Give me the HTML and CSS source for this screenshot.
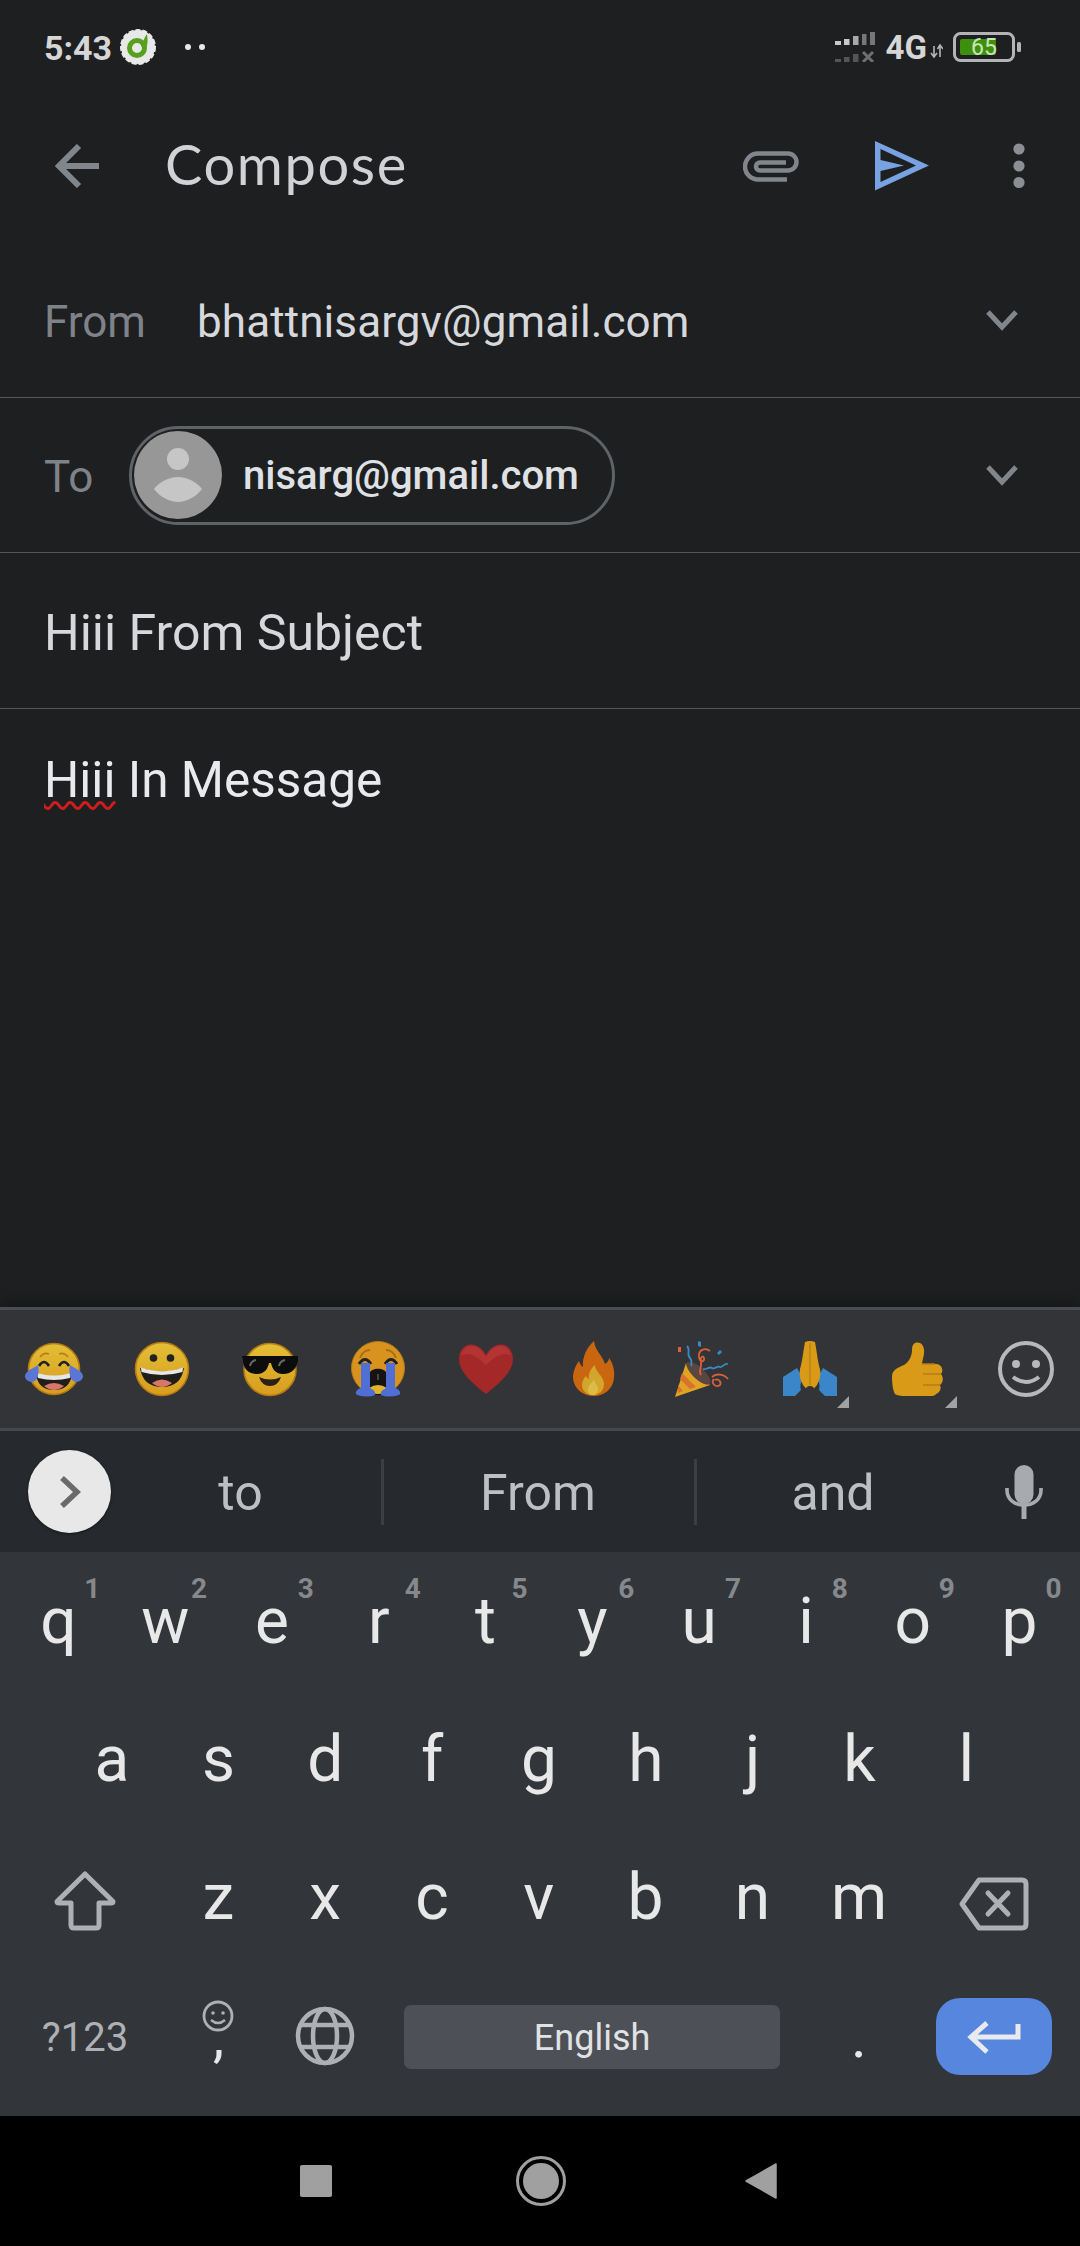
FILE: index.html
```html
<!DOCTYPE html>
<html lang="en">
<head>
<meta charset="utf-8">
<title>Compose</title>
<link rel="stylesheet" href="styles.css">
</head>
<body>
<div class="screen">
  <div class="status">
    <span class="time">5:43</span>
    <svg class="notif" width="38" height="38" viewBox="0 0 38 38">
      <circle cx="19" cy="19" r="17" fill="#e8e8e8" stroke="#e8e8e8" stroke-width="2" stroke-dasharray="5 2"/>
      <circle cx="18" cy="20" r="7.500" fill="none" stroke="#55a11f" stroke-width="5"/>
      <path d="M22 18 C24 14 25 10 28 6 C29 12 29 18 26 22Z" fill="#55a11f"/>
    </svg>
    <span class="dots"><i></i><i></i></span>
    <div class="status-right">
      <svg width="40" height="30" viewBox="0 0 40 30">
        <rect x="0" y="9" width="6" height="4" fill="#c8c8c8"/><rect x="9" y="7" width="5.5" height="6" fill="#c8c8c8"/><rect x="18" y="4" width="5.5" height="9" fill="#a9a9a9"/><rect x="27" y="2" width="4.5" height="11" fill="#777"/><rect x="35" y="0" width="5" height="13" fill="#777"/>
        <rect x="0" y="27" width="6" height="3" fill="#555"/><rect x="9" y="25" width="5.5" height="5" fill="#555"/><rect x="18" y="22" width="5.5" height="8" fill="#555"/>
        <path d="M28 20 L38 30 M38 20 L28 30" stroke="#6f6f6f" stroke-width="3" fill="none"/>
      </svg>
      <span class="net">4G</span>
      <svg class="arrows" width="13" height="14" viewBox="0 0 13 14"><path d="M4 2V12M1 9L4 13L7 9M10 13V2M7.5 5L10 1L13 5" stroke="#b5b5b5" stroke-width="1.6" fill="none"/></svg>
      <svg class="battery" width="68" height="30" viewBox="0 0 68 30">
        <rect x="1.5" y="1.5" width="59" height="27" rx="6" fill="none" stroke="#b4b4b4" stroke-width="3"/>
        <rect x="7" y="7" width="36" height="16" rx="2" fill="#3f8f0f"/>
        <rect x="64" y="10" width="4" height="10" rx="1.5" fill="#b4b4b4"/>
        <text x="31" y="23" class="bat-text" text-anchor="middle">65</text>
      </svg>
    </div>
  </div>

  <div class="appbar">
    <svg width="44" height="44" viewBox="0 0 44 44"><path d="M44 22H5M24 2L4 22L24 42" fill="none" stroke="#80868b" stroke-width="6"/></svg>
    <span class="title">Compose</span>
    <div class="actions">
      <svg width="56" height="31" viewBox="0 0 56 31"><path d="M44 28.5H15A13 13 0 0 1 15 2.5H45A8.5 8.5 0 0 1 45 19.5H17A3.8 3.8 0 0 1 17 11.5H43" fill="none" stroke="#80868b" stroke-width="4.5"/></svg>
      <svg width="55" height="50" viewBox="0 0 55 50"><path fill-rule="evenodd" d="M0 0L54 24.5L0 49.5ZM5.5 8V19L29 24.5L5.5 30V41L41 24.5Z" fill="#78a2e2"/></svg>
      <svg width="12" height="46" viewBox="0 0 12 46"><circle cx="6" cy="6" r="5.6" fill="#8b8e93"/><circle cx="6" cy="23" r="5.6" fill="#8b8e93"/><circle cx="6" cy="39.500" r="5.6" fill="#8b8e93"/></svg>
    </div>
  </div>

  <div class="field from">
    <span class="label from-label">From</span>
    <span class="value">bhattnisargv@gmail.com</span>
    <svg class="chev chev-from" width="32" height="22" viewBox="0 0 32 22"><path d="M2 3L16 18L30 3" fill="none" stroke="#80868b" stroke-width="5"/></svg>
  </div>
  <div class="field to">
    <span class="label to-label">To</span>
    <div class="chip">
      <svg class="avatar" width="88" height="88" viewBox="0 0 88 88">
        <circle cx="44" cy="44" r="44" fill="#979797"/>
        <circle cx="44" cy="28" r="11" fill="#c6c6c6"/>
        <path d="M20 58C26 50 36 46 44 46C52 46 62 50 68 58C62 66 52 71 44 71C36 71 26 66 20 58Z" fill="#c6c6c6"/>
      </svg>
      <span class="chip-text">nisarg@gmail.com</span>
    </div>
    <svg class="chev" width="32" height="22" viewBox="0 0 32 22"><path d="M2 3L16 18L30 3" fill="none" stroke="#80868b" stroke-width="5"/></svg>
  </div>
  <div class="field subject"><span class="big">Hiii From Subject</span></div>
  <div class="message"><span class="big msg"><span class="typo">Hiii</span> In Message</span></div>

  <div class="keyboard">
    <div class="emoji-row">
      <div class="emoji">
        <svg width="58" height="56" viewBox="-1 0 58 56">
          <defs>
            <linearGradient id="face" x1="0" y1="0" x2="0" y2="1"><stop offset="0" stop-color="#e2bf36"/><stop offset="1" stop-color="#d89c1e"/></linearGradient>
          </defs>
          <circle cx="28" cy="28" r="25.500" fill="url(#face)" stroke="#b57a12" stroke-width="1.6"/>
          <path d="M14 16Q18 11 23 13M33 13Q38 11 42 16" fill="none" stroke="#bd7d14" stroke-width="1.6"/>
          <path d="M13 25Q18 17 23 25M33 25Q38 17 43 25" fill="none" stroke="#222" stroke-width="2.6"/>
          <path d="M10 33Q28 37 46 33Q44 49 28 49Q12 49 10 33Z" fill="#211d1b"/>
          <path d="M11 32Q28 37 45 32L44 37Q28 41 12 37Z" fill="#e6e6e6"/>
          <path d="M18 45Q28 39 38 45Q33 49 28 49Q23 49 18 45Z" fill="#d6776a"/>
          <path d="M12 24C8 27 -1 30 -1 35.500A6.500 6.500 0 0 0 10 39C13 35 13 29 12 24Z" fill="#5b77d6"/>
          <path d="M44 24C48 27 57 30 57 35.500A6.500 6.500 0 0 1 46 39C43 35 43 29 44 24Z" fill="#5b77d6"/>
        </svg>
      </div>
      <div class="emoji">
        <svg width="56" height="56" viewBox="0 0 56 56">
          <circle cx="28" cy="28" r="26.500" fill="url(#face)" stroke="#b57a12" stroke-width="1.6"/>
          <circle cx="19.500" cy="17" r="3.800" fill="#222"/><circle cx="36.500" cy="17" r="3.800" fill="#222"/>
          <path d="M6 27Q28 34 50 27Q47 46 28 46Q9 46 6 27Z" fill="#211d1b"/>
          <path d="M7 26.500Q28 34 49 26.500L48.500 31Q28 37 7.500 31Z" fill="#e6e6e6"/>
          <path d="M18 42Q28 35 38 42Q33 46 28 46Q23 46 18 42Z" fill="#d6776a"/>
        </svg>
      </div>
      <div class="emoji">
        <svg width="56" height="56" viewBox="0 0 56 56">
          <circle cx="28" cy="28.500" r="26" fill="url(#face)" stroke="#b57a12" stroke-width="1.6"/>
          <path d="M0 15H56V19C55 27 50 33 41 33C33 33 30 27 29 22H27C26 27 23 33 15 33C6 33 1 27 1 19Z" fill="#0c0c0c"/>
          <path d="M8 25Q9 20 14 19M37 25Q38 20 43 19" fill="none" stroke="#666" stroke-width="2"/>
          <path d="M17 36Q28 41 39 36Q36 45 28 45Q20 45 17 36Z" fill="#2a2015"/>
        </svg>
      </div>
      <div class="emoji">
        <svg width="56" height="56" viewBox="0 0 56 56">
          <circle cx="28" cy="27" r="26.500" fill="#d8931f" stroke="#b57a12" stroke-width="1"/>
          <path d="M10 17Q13 9 20 9M36 9Q43 9 46 17" fill="none" stroke="#a96d18" stroke-width="1.8"/>
          <path d="M9 23Q15 14 21 23M35 23Q41 14 47 23" fill="none" stroke="#222" stroke-width="3"/>
          <path d="M19 33C21 26 35 26 37 33L38 54H18Z" fill="#161412"/>
          <path d="M19 47Q28 41 37 47Q37 53 28 53Q19 53 19 47Z" fill="#e0b52c"/>
          <path d="M27 33H29V39H27Z" fill="#444"/>
          <path d="M11 22H20V47C23 49 26 50 25 54Q18 57 7 54C4 52 7 48 11 47Z" fill="#4f6fd4"/>
          <path d="M36 22H45V47C49 48 52 52 49 54Q38 57 31 54C30 50 33 49 36 47Z" fill="#4f6fd4"/>
        </svg>
      </div>
      <div class="emoji">
        <svg width="56" height="56" viewBox="0 0 56 56">
          <path d="M28 14C24 6 17 3 12 3.500C5 4 1 11 1 18C1 32 17 44 28 53C39 44 55 32 55 18C55 11 51 4 44 3.500C39 3 32 6 28 14Z" fill="#a42828"/>
          <path d="M3 15C4 8 9 5 14 5C19 5 24 9 28 16C32 9 37 5 42 5C47 5 52 8 53 15C48 11 40 12 28 24C16 12 8 11 3 15Z" fill="#b43434"/>
        </svg>
      </div>
      <div class="emoji">
        <svg width="42" height="56" viewBox="0 0 42 56">
          <path d="M21 0C22 10 30 15 32 23C34 22 36 19 36 17C40 22 42 30 41 37C40 48 31 55 21 55C10 55 1 48 0 37C0 30 3 24 6 20C7 23 8 25 10 26C9 16 14 6 21 0Z" fill="#c9660f"/>
          <path d="M22 24C22 31 31 35 31 43C31 50 26 54 20 54C14 54 9 50 9 44C9 40 11 37 13 35C14 37 15 38 16 38C15 33 18 27 22 24Z" fill="#d2a62c"/>
          <path d="M21 38C21 42 25 44 25 48C25 52 22 54 20 54C17 54 15 52 15 49C15 44 19 42 21 38Z" fill="#dcbc46"/>
        </svg>
      </div>
      <div class="emoji">
        <svg width="56" height="56" viewBox="0 0 56 56">
          <path d="M12 22L36 44L1 56Z" fill="#e0a324"/>
          <path d="M8 32L22 46L16 48L6 38ZM4 44L9 50L4 52Z" fill="#d9722c"/>
          <path d="M12 22C18 18 30 26 36 38C38 44 34 45 28 42C20 38 12 28 12 22Z" fill="#5a4640"/>
          <path d="M24 0L27 1L27 6L24 5ZM46 9L48 11L45 14L43 12Z" fill="#3a88c4"/>
          <path d="M4 6L7 6L7 11L4 11Z" fill="#d9603a"/>
          <path d="M13 5C17 9 12 13 16 17C19 20 16 23 18 25M29 28C33 29 35 25 38 27C41 29 43 24 46 26C48 27 50 22 54 23" fill="none" stroke="#3a88c4" stroke-width="1.8"/>
          <path d="M36 10C31 6 24 9 25 16C26 22 31 21 30 17C29 14 26 16 27 20C28 28 24 30 27 34M38 36C42 32 50 33 54 38M40 38C36 42 42 47 46 44C48 41 44 37 41 39" fill="none" stroke="#d9603a" stroke-width="1.8"/>
        </svg>
      </div>
      <div class="emoji">
        <svg width="56" height="56" viewBox="0 0 56 56">
          <path d="M1 55V36L15 27L21 38C18 42 18 46 19 49L13 55Z" fill="#3a86c8"/>
          <path d="M55 55V36L41 27L35 38C38 42 38 46 37 49L43 55Z" fill="#3a86c8"/>
          <path d="M23 1Q28 -1 33 1C35 12 36 22 38 28C39 34 38 38 35 44L30 50H26L21 44C18 38 17 34 18 28C20 22 21 12 23 1Z" fill="#d99a18"/>
          <path d="M28 2V44" stroke="#b67e12" stroke-width="1.2"/>
          <circle cx="28" cy="50" r="5" fill="#323438"/>
        </svg>
        <i class="corner"></i>
      </div>
      <div class="emoji">
        <svg width="52" height="56" viewBox="0 0 52 56">
          <path d="M23 2C29 0 33 5 32 13C31 18 30 21 30 23H44C50 23 52 30 49 33C52 37 51 42 48 44C50 48 47 52 44 53C43 55 40 55 38 55H17C10 55 7 55 3 53C1 50 0 42 0 36C0 29 5 27 12 24C17 21 20 15 20 9C20 5 21 3 23 2Z" fill="#d99a18"/>
          <path d="M30 23H43M31 33H49M31 44H48" fill="none" stroke="#b67e12" stroke-width="1.4"/>
        </svg>
        <i class="corner"></i>
      </div>
      <div class="emoji">
        <svg width="58" height="58" viewBox="0 0 58 58">
          <circle cx="29" cy="29" r="26" fill="none" stroke="#b6b8ba" stroke-width="4"/>
          <circle cx="19" cy="24" r="4" fill="#b6b8ba"/><circle cx="39" cy="24" r="4" fill="#b6b8ba"/>
          <path d="M16 37Q29 47 42 37" fill="none" stroke="#b6b8ba" stroke-width="4"/>
        </svg>
      </div>
    </div>

    <div class="suggest">
      <div class="expand-cell">
        <div class="expand"><svg width="22" height="34" viewBox="0 0 22 34"><path d="M3 3L18 17L3 31" fill="none" stroke="#6a6a6a" stroke-width="5.500"/></svg></div>
      </div>
      <span class="sug sug-a">to</span>
      <i class="sep"></i>
      <span class="sug sug-b">From</span>
      <i class="sep"></i>
      <span class="sug sug-c">and</span>
      <div class="mic">
        <svg width="38" height="54" viewBox="0 0 38 54">
          <rect x="9.500" y="0" width="19" height="39" rx="9.500" fill="#a8aaad"/>
          <path d="M2 23V25C2 34 9 40 19 40C29 40 36 34 36 25V23" fill="none" stroke="#a8aaad" stroke-width="3.600"/>
          <rect x="16.500" y="40" width="5" height="14" fill="#a8aaad"/>
        </svg>
      </div>
    </div>

    <div class="keys">
      <div class="row">
        <span class="key">q<sup>1</sup></span><span class="key">w<sup>2</sup></span><span class="key">e<sup>3</sup></span><span class="key">r<sup>4</sup></span><span class="key">t<sup>5</sup></span><span class="key">y<sup>6</sup></span><span class="key">u<sup>7</sup></span><span class="key">i<sup>8</sup></span><span class="key">o<sup>9</sup></span><span class="key">p<sup>0</sup></span>
      </div>
      <div class="row row-home">
        <span class="key">a</span><span class="key">s</span><span class="key">d</span><span class="key">f</span><span class="key">g</span><span class="key">h</span><span class="key">j</span><span class="key">k</span><span class="key">l</span>
      </div>
      <div class="row">
        <span class="key wide">
          <svg class="shift" width="62" height="60" viewBox="0 0 62 60"><path d="M31 3L59 30.500Q59 32 57 32H45V54Q45 57 42 57H20Q17 57 17 54V32H5Q3 32 3 30.500Z" fill="none" stroke="#aeb0b3" stroke-width="5" stroke-linejoin="round"/></svg>
        </span>
        <span class="key">z</span><span class="key">x</span><span class="key">c</span><span class="key">v</span><span class="key">b</span><span class="key">n</span><span class="key">m</span>
        <span class="key wide-r">
          <svg class="back" width="70" height="54" viewBox="0 0 70 54"><path d="M3 27L20 3H63Q67 3 67 7V47Q67 51 63 51H20Z" fill="none" stroke="#aeb0b3" stroke-width="5" stroke-linejoin="round"/><path d="M29 16L49 37M49 16L29 37" stroke="#aeb0b3" stroke-width="5" stroke-linecap="round"/></svg>
        </span>
      </div>
      <div class="row">
        <span class="key wide sym">?123</span>
        <span class="key comma">,
          <svg class="comma-smile" width="32" height="32" viewBox="0 0 32 32"><circle cx="16" cy="16" r="14" fill="none" stroke="#aeb0b3" stroke-width="2.800"/><circle cx="11" cy="13" r="1.800" fill="#aeb0b3"/><circle cx="21" cy="13" r="1.800" fill="#aeb0b3"/><path d="M9 20Q16 26 23 20" fill="none" stroke="#aeb0b3" stroke-width="2.600"/></svg>
        </span>
        <span class="key">
          <svg width="60" height="60" viewBox="0 0 60 60"><g fill="none" stroke="#aeb0b3" stroke-width="4.500"><circle cx="30" cy="30" r="27"/><ellipse cx="30" cy="30" rx="12" ry="27"/><path d="M6 19H54M6 41H54"/></g></svg>
        </span>
        <span class="key space-key"><span class="space">English</span></span>
        <span class="key dot">.</span>
        <span class="key wide-r">
          <span class="enter"><svg width="54" height="34" viewBox="0 0 54 34"><path d="M51 3V16H6M20 2L4 16L20 31" fill="none" stroke="#e8eaed" stroke-width="5"/></svg></span>
        </span>
      </div>
    </div>
  </div>

  <div class="nav">
    <i class="nav-square"></i>
    <svg width="52" height="52" viewBox="0 0 52 52"><circle cx="26" cy="26" r="23.500" fill="none" stroke="#a0a0a0" stroke-width="3"/><circle cx="26" cy="26" r="18" fill="#a0a0a0"/></svg>
    <svg class="nav-back" width="32" height="38" viewBox="0 0 32 38"><path d="M31 2V36L1 19Z" fill="#a0a0a0" stroke="#a0a0a0" stroke-width="1.500" stroke-linejoin="round"/></svg>
  </div>
</div>
</body>
</html>
```

FILE: styles.css
```css
* { box-sizing: border-box; }
html, body { margin: 0; padding: 0; }
body { background: #1e1f21; font-family: Roboto, "Liberation Sans", sans-serif; }
svg { display: block; flex: none; }
i { font-style: normal; }

.screen { width: 1080px; height: 2246px; display: flex; flex-direction: column; background: #1e1f21; overflow: hidden; }

/* status bar */
.status { height: 94px; flex: none; display: flex; align-items: center; padding: 0 59px 0 44px; }
.time { font-size: 34px; font-weight: 700; color: #d6d6d6; padding-top: 2px; }
.notif { margin-left: 7px; }
.dots { display: flex; gap: 8px; margin-left: 28px; }
.dots i { width: 6px; height: 6px; border-radius: 50%; background: #e8e8e8; }
.status-right { margin-left: auto; display: flex; align-items: center; }
.net { font-size: 33px; font-weight: 700; color: #d6d6d6; margin-left: 11px; }
.arrows { margin: 8px 0 0 3px; }
.battery { margin-left: 10px; }
.bat-text { font-family: Roboto, sans-serif; font-size: 23px; fill: #c8e6b4; }

/* app bar */
.appbar { height: 144px; flex: none; display: flex; align-items: center; padding: 0 55px; }
.title { margin-left: 66px; padding-bottom: 5px; font-family: Lato, Roboto, sans-serif; font-size: 56px; letter-spacing: 1.6px; font-weight: 400; color: #d0d2d5; }
.actions { margin-left: auto; display: flex; align-items: center; gap: 76px; }
.actions svg:last-child { margin-left: 7px; }

/* fields */
.field { flex: none; display: flex; align-items: center; border-bottom: 1px solid #54565a; padding-left: 44px; padding-right: 62px; }
.from { height: 160px; padding-top: 8px; }
.to { height: 155px; }
.subject { height: 156px; padding-top: 5px; }
.label { font-size: 44px; color: #7f8389; flex: none; }
.from-label { width: 153px; }
.to-label { width: 85px; padding-top: 3px; }
.value { font-size: 44px; letter-spacing: .1px; color: #d6d8db; }
.chev { margin-left: auto; }
.chev-from { margin-top: -3px; }
.chip { height: 99px; width: 486px; border: 3px solid #5f6368; border-radius: 50px; display: flex; align-items: center; padding-left: 2px; }
.chip-text { margin-left: 21px; font-size: 40px; font-weight: 500; color: #dfe1e4; }
.big { font-size: 50px; color: #d6d8db; }
.message { flex: 1; padding: 41px 44px 0; line-height: 60px; }
.msg { font-size: 49.5px; color: #e8eaed; }
.typo { text-decoration: underline wavy #d01c1c 3px; text-underline-offset: 4px; }

/* keyboard */
.keyboard { flex: none; background: #32353a; box-shadow: 0 -6px 12px rgba(0, 0, 0, .25); }
.emoji-row { height: 124px; display: flex; background: #323438; border-top: 3px solid #4a4d51; border-bottom: 3px solid #45484c; }
.emoji { width: 108px; position: relative; display: flex; align-items: center; justify-content: center; }
.corner { position: absolute; left: 81px; top: 86px; width: 0; height: 0; border-left: 12px solid transparent; border-bottom: 12px solid #a0a2a4; }

.suggest { height: 121px; display: flex; align-items: center; background: #26292d; }
.expand-cell { width: 100px; flex: none; padding-left: 28px; }
.expand { width: 83px; height: 83px; border-radius: 50%; background: #e8e8e8; display: flex; align-items: center; justify-content: center; box-shadow: 0 1px 3px rgba(0,0,0,.5); }
.expand svg { margin-left: 0; }
.sug { font-size: 50px; color: #bdbfc2; text-align: center; padding-top: 3px; flex: none; }
.sug-a { width: 281px; }
.sug-b { width: 308px; margin-right: 2px; }
.sug-c { width: 272px; }
.sep { width: 3px; height: 66px; background: #3b3e42; flex: none; }
.mic { flex: 1; display: flex; justify-content: center; padding-right: 2px; }

.keys { height: 564px; }
.row { height: 138.4px; display: flex; padding: 0 5px; }
.row-home { padding: 0 58.4px; }
.key { width: 106.8px; flex: none; position: relative; display: flex; align-items: center; justify-content: center; font-size: 64px; color: #e8e8e8; }
.key sup { position: absolute; top: 23.4px; right: 5.5px; width: 28px; text-align: center; font-size: 28px; line-height: 28px; font-weight: 700; color: #85888c; }
.wide { width: 160px; }
.wide-r { width: 162.4px; }
.shift { margin-top: 6px; }
.back { margin-top: 12px; }
.sym { font-size: 40px; color: #aeb0b3; padding-top: 3px; }
.comma { font-size: 56px; padding-top: 2px; }
.comma-smile { position: absolute; left: 37px; top: 33px; }
.space-key { width: 427px; }
.space { width: 376px; height: 64px; margin-top: 1px; background: #4d5056; border-radius: 7px; display: flex; align-items: center; justify-content: center; padding-top: 3px; font-size: 36px; color: #e0e2e4; }
.dot { font-size: 60px; }
.enter { width: 116px; height: 77px; background: #5686dd; border-radius: 24px; display: flex; align-items: center; justify-content: center; }
.enter svg { margin-top: 4px; }

/* nav */
.nav { height: 130px; flex: none; background: #000; display: flex; align-items: center; gap: 183px; padding-left: 300px; }
.nav-square { width: 32px; height: 32px; background: #a0a0a0; border-radius: 2px; }
.nav-back { margin-left: -5px; }
```
